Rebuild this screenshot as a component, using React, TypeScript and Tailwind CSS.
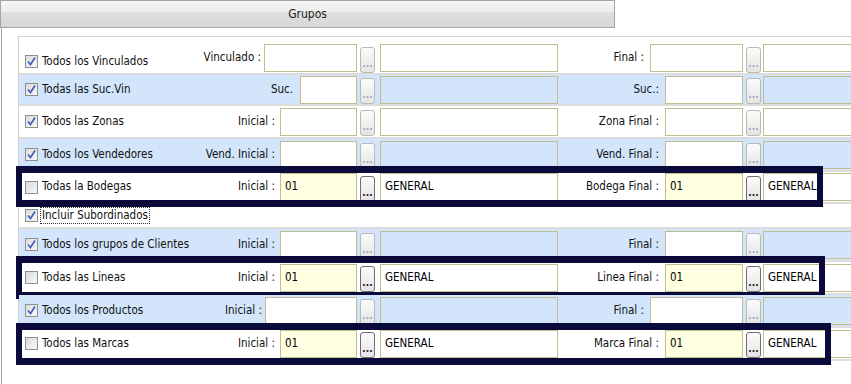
import * as React from "react";

type Row = {
  label: string;
  checked: boolean;
  l1: string;
  w1: string;
  g1: string;
  l2: string;
  w2: string;
  h: string;
  blue?: boolean;
  on?: boolean;
  box?: string;
  first?: boolean;
};

const rows: Row[] = [
  { label: "Todos los Vinculados", checked: true, l1: "Vinculado :", w1: "w-[93px]", g1: "mr-[3px]", l2: "Final :", w2: "w-[93px]", h: "h-[38px] pt-[6px]", first: true },
  { label: "Todas las Suc.Vin", checked: true, l1: "Suc.", w1: "w-[57px]", g1: "mr-[7px]", l2: "Suc.:", w2: "w-[78px]", h: "h-[31px]", blue: true },
  { label: "Todos las Zonas", checked: true, l1: "Inicial :", w1: "w-[77px]", g1: "mr-[5px]", l2: "Zona Final :", w2: "w-[78px]", h: "h-[33px]" },
  { label: "Todos los Vendedores", checked: true, l1: "Vend. Inicial :", w1: "w-[77px]", g1: "mr-[5px]", l2: "Vend. Final :", w2: "w-[78px]", h: "h-[33px]", blue: true },
  { label: "Todas la Bodegas", checked: false, l1: "Inicial :", w1: "w-[77px]", g1: "mr-[5px]", l2: "Bodega Final :", w2: "w-[78px]", h: "h-[32px]", on: true, box: "-top-[6px] -bottom-[5px] w-[807px]" },
  { label: "Todos los grupos de Clientes", checked: true, l1: "Inicial :", w1: "w-[77px]", g1: "mr-[5px]", l2: "Final :", w2: "w-[78px]", h: "h-[33px]", blue: true },
  { label: "Todas las Lineas", checked: false, l1: "Inicial :", w1: "w-[77px]", g1: "mr-[5px]", l2: "Linea Final :", w2: "w-[78px]", h: "h-[33px]", on: true, box: "-top-[6px] -bottom-[6px] w-[809px]" },
  { label: "Todos los Productos", checked: true, l1: "Inicial :", w1: "w-[92px]", g1: "mr-[3px]", l2: "Final :", w2: "w-[93px]", h: "h-[33px]", blue: true },
  { label: "Todos las Marcas", checked: false, l1: "Inicial :", w1: "w-[77px]", g1: "mr-[5px]", l2: "Marca Final :", w2: "w-[78px]", h: "h-[33px]", on: true, box: "-top-[5px] -bottom-[6px] w-[815px]" },
];

const Check = ({ checked }: { checked: boolean }) => (
  <span className="flex h-[13px] w-[13px] shrink-0 items-center justify-center border border-[#8e8f8f] bg-[linear-gradient(135deg,#dcdcdc,#f8f8f8)]">
    {checked && (
      <svg width="11" height="11" viewBox="0 0 11 11">
        <path d="M2 5.5 L4.5 8.5 L9 1.5" fill="none" stroke="#4660b8" strokeWidth="1.7" />
      </svg>
    )}
  </span>
);

const Dots = ({ on }: { on?: boolean }) => (
  <div
    className={`mt-[3px] ml-[3px] flex h-[26px] w-[15px] shrink-0 items-end justify-center rounded-[3px] border bg-[linear-gradient(to_bottom,#fbfbfb,#e4e4e4)] pb-[3px] text-[10px] leading-none font-bold ${
      on ? "border-[#6e6e6e] text-[#1a1a1a]" : "border-[#b9b9b9] text-[#a3a8ba]"
    }`}
  >
    ...
  </div>
);

const Field = ({ cls, value }: { cls: string; value?: string }) => (
  <div className={`flex h-[28px] shrink-0 items-center border border-[#c2bc90] px-[4px] text-[11.5px] text-black ${cls}`}>
    {value}
  </div>
);

const RowLine = ({ r }: { r: Row }) => {
  const bg = r.blue ? "bg-[#d2e5fb]" : "bg-white";
  const code = r.on ? "bg-[#ffffe1]" : "bg-white";
  const desc = r.blue ? "bg-transparent" : "bg-white";
  return (
    <div className={`relative flex items-center border-b-2 border-[#dcdcdc] ${r.h} ${bg}`}>
      <div className="flex w-[338px] shrink-0 items-center justify-between">
        <div className={`flex items-center pl-[6px] ${r.first ? "mt-[7px]" : ""}`}>
          <Check checked={r.checked} />
          <span className="ml-[4px] whitespace-nowrap">{r.label}</span>
        </div>
        <div className="flex items-center">
          <span className={`whitespace-nowrap ${r.g1}`}>{r.l1}</span>
          <Field cls={`${r.w1} ${code}`} value={r.on ? "01" : ""} />
        </div>
      </div>
      <Dots on={r.on} />
      <Field cls={`ml-[5px] w-[178px] ${desc}`} value={r.on ? "GENERAL" : ""} />
      <div className="flex w-[185px] shrink-0 items-center justify-end">
        <span className="mr-[6px] whitespace-nowrap">{r.l2}</span>
        <Field cls={`${r.w2} ${code}`} value={r.on ? "01" : ""} />
      </div>
      <Dots on={r.on} />
      <Field cls={`ml-[2px] w-[200px] ${desc}`} value={r.on ? "GENERAL" : ""} />
      {r.box && (
        <div className={`pointer-events-none absolute -left-[3px] border-x-[6px] border-y-[7px] border-[#0b0b3b] ${r.box}`} />
      )}
    </div>
  );
};

const App = () => {
  return (
    <div className="h-[384px] w-[851px] overflow-hidden bg-white text-[11.5px] text-[#111] [font-family:'DejaVu_Sans_Condensed','DejaVu_Sans',sans-serif]">
      {/* title bar */}
      <div className="flex h-[28px] w-[615px] items-center justify-center border border-[#a3a3a3] bg-[linear-gradient(to_bottom,#f6f6f6_0%,#ededed_42%,#dedede_46%,#d7d7d7_100%)] text-[12px] text-[#1e1e1e]">
        Grupos
      </div>

      <div className="ml-[1px] h-[356px] border-l border-[#a0a0a0] pt-[8px]">
        {/* groups panel */}
        <div className="ml-[16px] w-[1000px] border-t border-l border-[#d2d2d2]">
          {rows.slice(0, 5).map((r) => (
            <RowLine key={r.label} r={r} />
          ))}
          <div className="flex h-[25px] items-center border-b-2 border-[#dcdcdc] bg-white pl-[6px]">
            <Check checked={true} />
            <span className="ml-[2px] border border-dotted border-[#333] px-[1px] leading-[15px]">
              Incluir Subordinados
            </span>
          </div>
          {rows.slice(5).map((r) => (
            <RowLine key={r.label} r={r} />
          ))}
        </div>
      </div>
    </div>
  );
};

export default App;
